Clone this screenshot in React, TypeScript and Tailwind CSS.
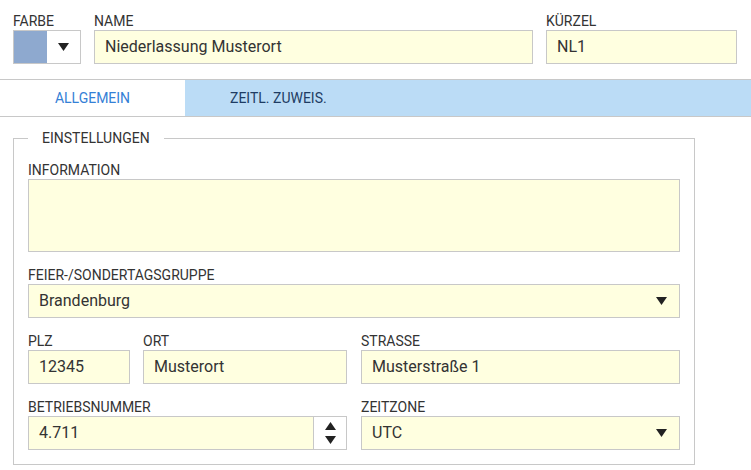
import React from 'react';

const font = { fontFamily: 'Roboto, "Liberation Sans", sans-serif' };

const Label: React.FC<{ children: React.ReactNode }> = ({ children }) => (
  <div className="h-[17px] text-[14px] leading-[17px] text-[#333] uppercase">{children}</div>
);

const Caret: React.FC<{ up?: boolean; className?: string }> = ({ up, className }) => (
  <svg width="11" height="8" viewBox="0 0 11 8" className={className}>
    {up ? <polygon points="5.5,0 11,8 0,8" fill="#222" /> : <polygon points="0,0 11,0 5.5,8" fill="#222" />}
  </svg>
);

const inputCls =
  'h-[34px] border border-[#c8c8c8] bg-[#ffffe0] px-[10px] flex items-center text-[16px] text-[#333]';

const Field: React.FC<{ label: string; value: string; className?: string }> = ({ label, value, className }) => (
  <div className={className}>
    <Label>{label}</Label>
    <div className={inputCls}>{value}</div>
  </div>
);

const SelectField: React.FC<{ label: string; value: string; className?: string }> = ({ label, value, className }) => (
  <div className={className}>
    <Label>{label}</Label>
    <div className={`${inputCls} justify-between pr-[12px]`}>
      <span>{value}</span>
      <Caret />
    </div>
  </div>
);

export default function App() {
  return (
    <div className="w-[751px] h-[470px] bg-white overflow-hidden" style={font}>
      {/* Header */}
      <div className="flex gap-[13px] px-[13px] pt-[13px]">
        <div className="w-[68px]">
          <Label>Farbe</Label>
          <div className="h-[34px] flex border border-[#c8c8c8] bg-white">
            <div className="w-[33px] bg-[#8ea9cf]" />
            <div className="flex-1 flex items-center justify-center">
              <Caret />
            </div>
          </div>
        </div>
        <Field label="Name" value="Niederlassung Musterort" className="w-[439px]" />
        <Field label="Kürzel" value="NL1" className="w-[191px]" />
      </div>

      {/* Tabs */}
      <div className="mt-[15px] flex h-[38px] border-y border-[#c8c8c8] bg-[#bbdcf6] text-[14px]">
        <div className="w-[185px] bg-white flex items-center justify-center text-[#3580d6]">ALLGEMEIN</div>
        <div className="pl-[45px] flex items-center text-[#1e3c64]">ZEITL. ZUWEIS.</div>
      </div>

      {/* Settings */}
      <fieldset className="mx-[13px] mt-[13px] w-[682px] border border-[#c8c8c8] px-[14px] pb-[14px]">
        <legend className="px-[14px] text-[14px] leading-[16px] text-[#333]">EINSTELLUNGEN</legend>
        <div className="flex flex-col gap-[15px] pt-[16px]">
          <div>
            <Label>Information</Label>
            <div className="h-[73px] border border-[#c8c8c8] bg-[#ffffe0]" />
          </div>
          <SelectField label="Feier-/Sondertagsgruppe" value="Brandenburg" />
          <div className="flex gap-[14px]">
            <div className="w-[319px] flex gap-[13px]">
              <Field label="PLZ" value="12345" className="w-[102px]" />
              <Field label="Ort" value="Musterort" className="flex-1" />
            </div>
            <Field label="STRASSE" value="Musterstraße 1" className="flex-1" />
          </div>
          <div className="flex gap-[14px]">
            <div className="w-[319px]">
              <Label>Betriebsnummer</Label>
              <div className="h-[34px] flex border border-[#c8c8c8] bg-[#ffffe0] text-[16px] text-[#333]">
                <div className="flex-1 flex items-center px-[10px]">4.711</div>
                <div className="w-[33px] border-l border-[#c8c8c8] bg-white flex flex-col items-center justify-center gap-[6px]">
                  <Caret up />
                  <Caret />
                </div>
              </div>
            </div>
            <SelectField label="Zeitzone" value="UTC" className="flex-1" />
          </div>
        </div>
      </fieldset>
    </div>
  );
}
